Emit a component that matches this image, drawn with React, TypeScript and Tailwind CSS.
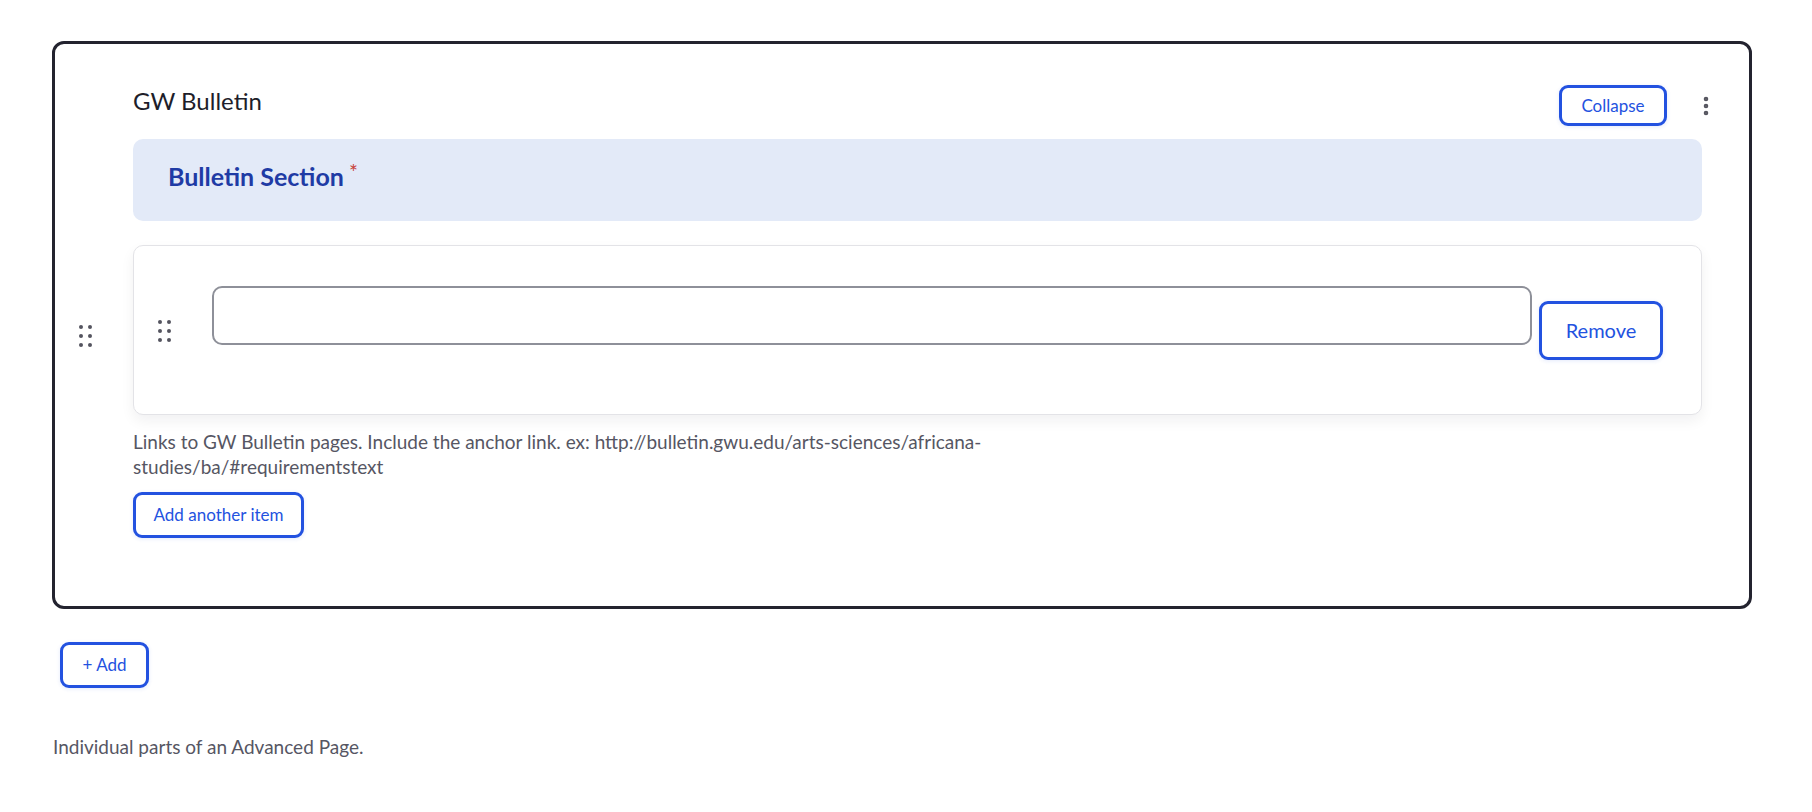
import { MoreVertical } from 'lucide-react'

function DragHandle() {
  return (
    <div className="grid grid-cols-2 gap-x-[5px] gap-y-[5px]">
      {[0, 1, 2, 3, 4, 5].map((i) => (
        <span key={i} className="block h-[4px] w-[4px] rounded-full bg-[#54545f]" />
      ))}
    </div>
  )
}

function OutlineButton({ children, className = '' }: { children: React.ReactNode; className?: string }) {
  return (
    <button
      type="button"
      className={`rounded-[9px] border-[3px] border-[#2352e0] bg-white text-[#2352e0] shadow-[0_1px_4px_rgba(35,82,224,0.12)] ${className}`}
    >
      {children}
    </button>
  )
}

export default function App() {
  return (
    <div className="min-h-screen bg-white pl-[52px] pr-[60px] pt-[41px] font-['Lato','Noto_Sans',sans-serif] text-[#1f1f2b]">
      <div className="flex rounded-[12px] border-[3px] border-[#23232f]">
        <div className="flex w-[78px] shrink-0 items-center pl-[24px] pt-[21px]">
          <DragHandle />
        </div>

        <div className="flex-1 pb-[68px] pr-[47px]">
          <div className="-mr-[16px] flex items-center pt-[41px]">
            <div className="mb-[9px] flex-1 text-[24px] leading-[30px] text-[#1e1e2a]">GW Bulletin</div>
            <OutlineButton className="h-[41px] w-[108px] text-[17px]">Collapse</OutlineButton>
            <div className="ml-[27px] flex w-[24px] justify-center text-[#55555f]">
              <MoreVertical size={24} strokeWidth={2.6} />
            </div>
          </div>

          <div className="mt-[13px] flex h-[82px] items-center rounded-[10px] bg-[#e3eaf8] px-[35px] pb-[7px]">
            <span className="text-[25px] font-bold leading-none text-[#1f3ba5]">Bulletin Section</span>
            <span className="-mt-[10px] ml-[5px] text-[21px] leading-none text-[#c8433a]">*</span>
          </div>

          <div className="mt-[24px] flex h-[170px] items-start rounded-[10px] border-[1.5px] border-[#e3e3e7] bg-white pl-[24px] pr-[38px] shadow-[0_6px_14px_rgba(20,20,40,0.06)]">
            <div className="mt-[74px]">
              <DragHandle />
            </div>
            <input
              type="text"
              className="ml-[41px] mt-[40px] h-[59px] flex-1 rounded-[10px] border-[2px] border-[#8e9099] bg-white px-3 outline-none"
            />
            <OutlineButton className="ml-[7px] mt-[55px] h-[59px] w-[124px] pb-[2px] text-[20px]">Remove</OutlineButton>
          </div>

          <p className="mt-[14px] text-[19px] leading-[25px] text-[#565663]">
            Links to GW Bulletin pages. Include the anchor link. ex: http://bulletin.gwu.edu/arts-sciences/africana-
            <br />
            studies/ba/#requirementstext
          </p>

          <OutlineButton className="mt-[13px] h-[46px] w-[171px] text-[17px]">Add another item</OutlineButton>
        </div>
      </div>

      <OutlineButton className="ml-[8px] mt-[33px] h-[46px] w-[89px] text-[17px]">+ Add</OutlineButton>

      <p className="ml-[1px] mt-[46px] text-[19px] leading-[25px] text-[#565663]">Individual parts of an Advanced Page.</p>
    </div>
  )
}
